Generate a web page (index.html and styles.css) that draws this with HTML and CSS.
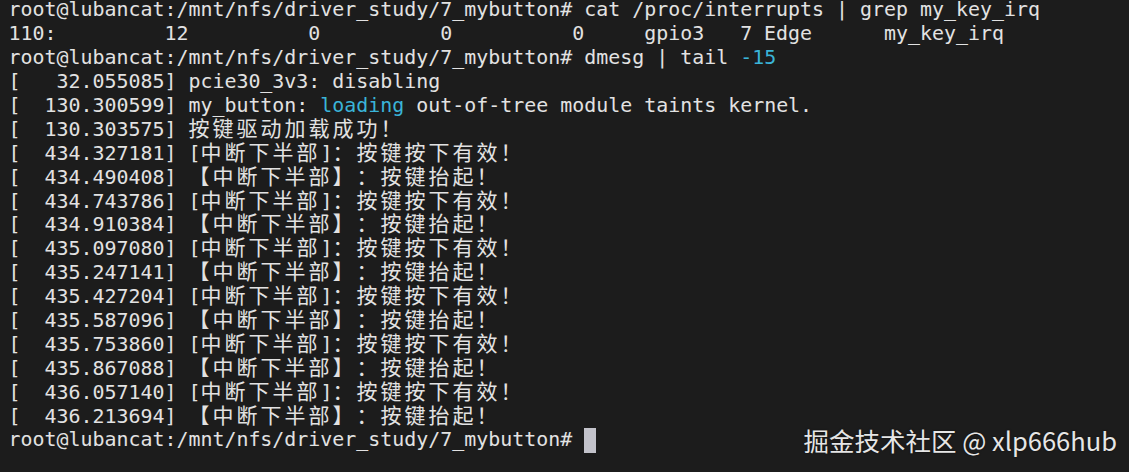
FILE: index.html
```html
<!DOCTYPE html>
<html lang="zh">
<head>
<meta charset="utf-8">
<title>terminal</title>
<link rel="stylesheet" href="styles.css">
</head>
<body>
<div class="term">
<div class="ln">root@lubancat:/mnt/nfs/driver_study/7_mybutton# cat /proc/interrupts | grep my_key_irq</div>
<div class="ln">110:         12          0          0          0     gpio3   7 Edge      my_key_irq</div>
<div class="ln">root@lubancat:/mnt/nfs/driver_study/7_mybutton# dmesg | tail <span class="hl">-15</span></div>
<div class="ln">[   32.055085] pcie30_3v3: disabling</div>
<div class="ln">[  130.300599] my_button: <span class="hl">loading</span> out-of-tree module taints kernel.</div>
<div class="ln">[  130.303575] <span class="cj">按键驱动加载成功！</span></div>
<div class="ln">[  434.327181] [<span class="cj">中断下半部</span>]<span class="cj">：按键按下有效！</span></div>
<div class="ln">[  434.490408] <span class="cj">【中断下半部】：按键抬起！</span></div>
<div class="ln">[  434.743786] [<span class="cj">中断下半部</span>]<span class="cj">：按键按下有效！</span></div>
<div class="ln">[  434.910384] <span class="cj">【中断下半部】：按键抬起！</span></div>
<div class="ln">[  435.097080] [<span class="cj">中断下半部</span>]<span class="cj">：按键按下有效！</span></div>
<div class="ln">[  435.247141] <span class="cj">【中断下半部】：按键抬起！</span></div>
<div class="ln">[  435.427204] [<span class="cj">中断下半部</span>]<span class="cj">：按键按下有效！</span></div>
<div class="ln">[  435.587096] <span class="cj">【中断下半部】：按键抬起！</span></div>
<div class="ln">[  435.753860] [<span class="cj">中断下半部</span>]<span class="cj">：按键按下有效！</span></div>
<div class="ln">[  435.867088] <span class="cj">【中断下半部】：按键抬起！</span></div>
<div class="ln">[  436.057140] [<span class="cj">中断下半部</span>]<span class="cj">：按键按下有效！</span></div>
<div class="ln">[  436.213694] <span class="cj">【中断下半部】：按键抬起！</span></div>
<div class="ln">root@lubancat:/mnt/nfs/driver_study/7_mybutton# <span class="cursor"></span></div>
</div>
<div class="wm">掘金技术社区 @ xlp666hub</div>
</body>
</html>
```

FILE: styles.css
```css
html, body {
  margin: 0;
  padding: 0;
  background: #1c1c1c;
  width: 1129px;
  height: 472px;
  overflow: hidden;
}
body {
  position: relative;
}
.term {
  margin-top: -1.6px;
  padding-left: 8.5px;
  font-family: "DejaVu Sans Mono", monospace;
  font-size: 19.93px;
  line-height: 23.9px;
  color: #e2e2e2;
}
.ln {
  white-space: pre;
  height: 23.9px;
}
.hl {
  color: #3ab4d8;
}
.cj {
  font-family: "Noto Sans CJK SC", sans-serif;
  font-size: 21px;
  letter-spacing: 3px;
  line-height: 0;
  text-spacing-trim: space-all;
  font-kerning: none;
}
.cursor {
  display: inline-block;
  width: 12px;
  height: 25px;
  background: #c3c3cb;
  vertical-align: top;
  margin-top: -0.5px;
}
.wm {
  position: absolute;
  right: 12px;
  top: 422px;
  font-family: "Noto Sans CJK SC", sans-serif;
  font-size: 25.5px;
  line-height: 36px;
  color: #e6e6e6;
  text-shadow: 0 0 2px rgba(0,0,0,0.6);
}
```
